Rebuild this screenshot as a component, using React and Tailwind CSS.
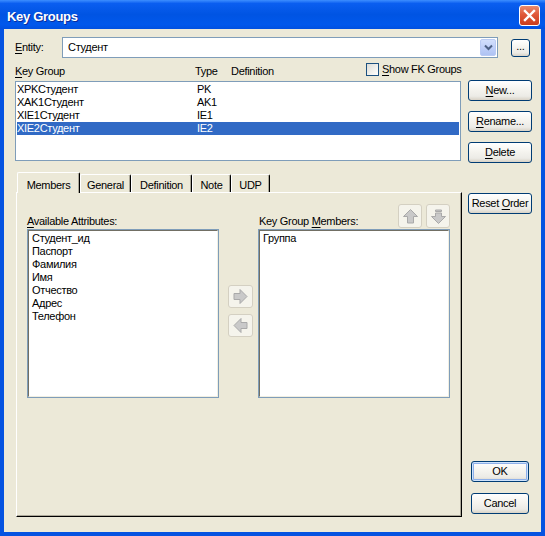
import React from 'react';

const btn =
  "flex items-center justify-center rounded-[3px] border border-[#003C74] bg-[linear-gradient(180deg,#FFFFFF_0%,#F5F4EF_45%,#ECEBE6_80%,#D8D2C6_100%)] text-[11px] leading-[13px] text-black";

const keyGroups = [
  { name: 'XPKСтудент', type: 'PK' },
  { name: 'XAK1Студент', type: 'AK1' },
  { name: 'XIE1Студент', type: 'IE1' },
  { name: 'XIE2Студент', type: 'IE2', selected: true },
];

const attributes = ['Студент_ид', 'Паспорт', 'Фамилия', 'Имя', 'Отчество', 'Адрес', 'Телефон'];

const tabs = [
  { label: 'Members', w: 'w-[63px]', active: true },
  { label: 'General', w: 'w-[51px]' },
  { label: 'Definition', w: 'w-[61px]' },
  { label: 'Note', w: 'w-[39px]' },
  { label: 'UDP', w: 'w-[39px]' },
];

const U = ({ children }) => (
  <span className="underline decoration-1 underline-offset-[2px]">{children}</span>
);

const ArrowIcon = ({ dir }) => {
  const paths = {
    right: 'M1 4.5H7V0.5L14 7.5L7 14.5V10.5H1Z',
    left: 'M14 4.5H8V0.5L1 7.5L8 14.5V10.5H14Z',
    up: 'M7.5 0.5L14.5 7.5H10.5V14H4.5V7.5H0.5Z',
    down: 'M4.5 4H10.5V7.5H14.5L7.5 14.5L0.5 7.5H4.5Z',
  };
  return (
    <svg width="15" height="15" viewBox="0 0 15 15">
      {dir === 'down' && <path d="M4.5 1H10.5V2.5H4.5Z" fill="#C9C9C9" stroke="#A9A9A9" strokeWidth="1" />}
      <path d={paths[dir]} fill="#C9C9C9" stroke="#A9A9A9" strokeWidth="1" strokeLinejoin="miter" />
    </svg>
  );
};

const DisabledBtn = ({ dir, className }) => (
  <div
    className={
      "flex items-center justify-center rounded-[3px] border border-[#D4D0C2] bg-[#F5F4EC] " + className
    }
  >
    <ArrowIcon dir={dir} />
  </div>
);

const SunkenList = ({ items, className }) => (
  <div className={"border border-[#7F9DB9] bg-white " + className}>
    <div className="h-full border-l border-t border-l-[#716F64] border-t-[#716F64] border-r border-b border-r-[#F1EFE2] border-b-[#F1EFE2] pt-[1px] pl-[3px]">
      {items.map((it) => (
        <div key={it} className="h-[13px] leading-[13px]">
          {it}
        </div>
      ))}
    </div>
  </div>
);

export default function App() {
  return (
    <div className="w-[545px] h-[536px] flex flex-col bg-[#0553E1] font-['Liberation_Sans',Arial,sans-serif] text-[11px] leading-[13px] tracking-[-0.3px] text-black select-none">
      {/* title bar */}
      <div className="h-[29px] flex items-start justify-between bg-[linear-gradient(180deg,#3D8EFF_0%,#0A5EF0_12%,#0054E3_50%,#0058EC_85%,#0050E0_100%)]">
        <div className="pl-[7px] pt-[9px] text-[13px] leading-[15px] font-bold tracking-[-0.3px] text-white [text-shadow:1px_1px_#0B2C9A]">
          Key Groups
        </div>
        <div className="mt-[5px] mr-[5px] w-[21px] h-[21px] rounded-[3px] border border-white bg-[linear-gradient(180deg,#E98B6E_0%,#E0593A_45%,#C93C1C_100%)] flex items-center justify-center">
          <svg width="13" height="13" viewBox="0 0 13 13">
            <path d="M2 2L11 11M11 2L2 11" stroke="white" strokeWidth="2.4" strokeLinecap="square" />
          </svg>
        </div>
      </div>

      {/* body */}
      <div className="flex-1 mx-[4px] mb-[4px] bg-[#ECE9D8] pt-[8px] pl-[11px]">
        {/* entity row */}
        <div className="flex items-center h-[21px]">
          <div className="w-[47px]">
            <U>E</U>ntity:
          </div>
          <div className="w-[436px] h-[21px] border border-[#7F9DB9] bg-white flex items-center justify-between">
            <span className="pl-[5px]">Студент</span>
            <div className="mr-[1px] w-[16px] h-[17px] rounded-[2px] border border-[#BACBF4] bg-[linear-gradient(180deg,#D2DFFC_0%,#BCCDF8_60%,#AFC3F3_100%)] flex items-center justify-center">
              <svg width="9" height="7" viewBox="0 0 9 7">
                <path d="M1 1.5L4.5 5L8 1.5" fill="none" stroke="#4D6185" strokeWidth="2" />
              </svg>
            </div>
          </div>
          <div className={btn + " ml-[13px] w-[19px] h-[18px] pb-[3px]"}>...</div>
        </div>

        {/* column headers */}
        <div className="flex items-start h-[22px]">
          <div className="mt-[7px] w-[180px]">
            <U>K</U>ey Group
          </div>
          <div className="mt-[7px] w-[36px]">Type</div>
          <div className="mt-[7px] w-[135px]">Definition</div>
          <div className="mt-[5px] flex items-center">
            <div className="w-[13px] h-[13px] border border-[#1C5180] bg-[linear-gradient(135deg,#DCDCD7_0%,#F2F2EE_60%,#FFFFFF_100%)]" />
            <span className="ml-[3px]">
              <U>S</U>how FK Groups
            </span>
          </div>
        </div>

        {/* key group list + buttons */}
        <div className="flex items-start">
          <div className="mt-[1px] w-[446px] h-[80px] border border-[#7F9DB9] bg-white p-[1px]">
            {keyGroups.map((g) => (
              <div
                key={g.name}
                className={
                  'flex h-[13px] leading-[13px] ' + (g.selected ? 'bg-[#316AC5] text-white' : '')
                }
              >
                <span className="w-[180px]">{g.name}</span>
                <span>{g.type}</span>
              </div>
            ))}
          </div>
          <div className="ml-[7px] flex flex-col gap-[10px]">
            <div className={btn + ' w-[64px] h-[21px]'}>
              <span>
                <U>N</U>ew...
              </span>
            </div>
            <div className={btn + ' w-[64px] h-[21px]'}>
              <span>
                <U>R</U>ename...
              </span>
            </div>
            <div className={btn + ' w-[64px] h-[21px]'}>
              <span>
                <U>D</U>elete
              </span>
            </div>
          </div>
        </div>

        {/* tabs section */}
        <div className="mt-[9px] flex">
          <div className="ml-[1px] w-[446px] flex flex-col">
            <div className="h-[20px] flex items-end pl-[1px]">
              {tabs.map((t) =>
                t.active ? (
                  <div
                    key={t.label}
                    className={
                      t.w +
                      ' relative z-10 h-[21px] mb-[-1px] pt-[6px] text-center bg-[#ECE9D8] border-l border-t border-white border-r border-r-black rounded-t-[2px] shadow-[inset_-1px_0_0_#ACA899]'
                    }
                  >
                    {t.label}
                  </div>
                ) : (
                  <div
                    key={t.label}
                    className={
                      t.w +
                      ' h-[18px] pt-[4px] text-center border-l border-t border-white border-r border-r-black rounded-t-[2px] shadow-[inset_-1px_0_0_#ACA899]'
                    }
                  >
                    {t.label}
                  </div>
                )
              )}
            </div>
            <div className="h-[325px] border-l border-t border-white border-r border-b border-r-black border-b-black shadow-[inset_-1px_-1px_0_#ACA899] pt-[11px] pl-[10px] flex items-start">
              {/* available */}
              <div className="w-[192px]">
                <div className="h-[25px] flex items-end pb-[1px]">
                  <span>
                    <U>A</U>vailable Attributes:
                  </span>
                </div>
                <SunkenList items={attributes} className="h-[169px]" />
              </div>
              {/* move buttons */}
              <div className="ml-[9px] w-[25px] pt-[81px] flex flex-col gap-[6px]">
                <DisabledBtn dir="right" className="w-[25px] h-[23px]" />
                <DisabledBtn dir="left" className="w-[25px] h-[23px]" />
              </div>
              {/* members */}
              <div className="ml-[5px] w-[192px]">
                <div className="h-[25px] flex justify-between">
                  <span className="self-end pl-[1px] pb-[1px]">
                    Key Group <U>M</U>embers:
                  </span>
                  <div className="flex gap-[4px]">
                    <DisabledBtn dir="up" className="w-[24px] h-[24px]" />
                    <DisabledBtn dir="down" className="w-[24px] h-[24px]" />
                  </div>
                </div>
                <SunkenList items={['Группа']} className="h-[169px]" />
              </div>
            </div>
          </div>

          {/* right buttons */}
          <div className="ml-[6px] flex flex-col">
            <div className={btn + ' mt-[21px] w-[64px] h-[21px]'}>
              <span>
                Reset <U>O</U>rder
              </span>
            </div>
            <div className={btn + ' mt-auto ml-[3px] w-[58px] h-[21px] shadow-[inset_0_0_0_1px_#CEE3FC,inset_0_0_0_2px_#8EB0EA]'}>
              OK
            </div>
            <div className={btn + ' mt-[11px] mb-[3px] ml-[3px] w-[58px] h-[21px]'}>Cancel</div>
          </div>
        </div>
      </div>
    </div>
  );
}
